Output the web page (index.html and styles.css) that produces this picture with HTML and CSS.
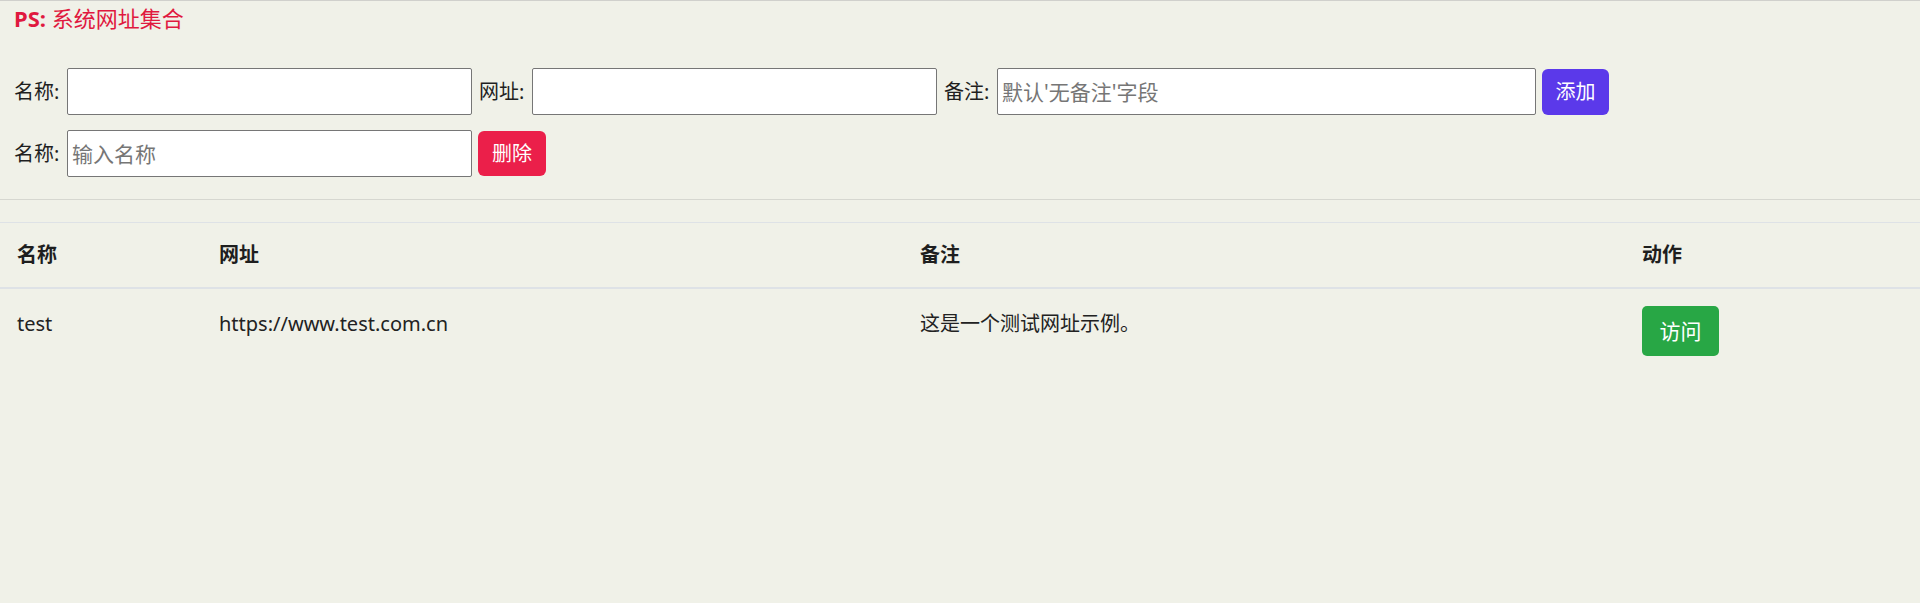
FILE: index.html
```html
<!DOCTYPE html>
<html lang="zh-CN">
<head>
<meta charset="utf-8">
<title>系统网址集合</title>
<link rel="stylesheet" href="styles.css">
</head>
<body>
<h1 class="title"><b>PS:</b> 系统网址集合</h1>
<div class="forms">
  <div class="form-row">
    <label class="lbl">名称:</label>
    <input class="field" type="text">
    <label class="lbl lbl-next">网址:</label>
    <input class="field" type="text">
    <label class="lbl lbl-next">备注:</label>
    <input class="field field-wide" type="text" placeholder="默认'无备注'字段">
    <button class="btn btn-add">添加</button>
  </div>
  <div class="form-row">
    <label class="lbl">名称:</label>
    <input class="field" type="text" placeholder="输入名称">
    <button class="btn btn-del">删除</button>
  </div>
</div>
<hr class="divider">
<table class="sites">
  <colgroup>
    <col class="c1"><col class="c2"><col class="c3"><col>
  </colgroup>
  <thead>
    <tr><th>名称</th><th>网址</th><th>备注</th><th>动作</th></tr>
  </thead>
  <tbody>
    <tr>
      <td>test</td>
      <td>https://www.test.com.cn</td>
      <td>这是一个测试网址示例。</td>
      <td class="act"><button class="btn btn-visit">访问</button></td>
    </tr>
  </tbody>
</table>
</body>
</html>
```
FILE: styles.css
```css
html, body {
  margin: 0;
  padding: 0;
}
body {
  background: #f0f1e8;
  border-top: 1px solid #d0d0cc;
  font-family: "Noto Sans", "Noto Sans CJK SC", sans-serif;
  color: #212529;
}
.title {
  margin: 0;
  padding: 2px 14px 0;
  font-size: 22px;
  line-height: 30px;
  font-weight: normal;
  color: #e0193f;
}
.title b {
  font-weight: 700;
}
.forms {
  margin-top: 35px;
  padding: 0 14px;
  display: flex;
  flex-direction: column;
  gap: 15px;
}
.form-row {
  display: flex;
  align-items: center;
  height: 47px;
}
.lbl {
  width: 49px;
  margin-right: 4px;
  font-size: 20px;
  line-height: 30px;
  color: #1f1f1f;
  white-space: nowrap;
}
.lbl-next {
  margin-left: 7px;
}
.field {
  box-sizing: border-box;
  width: 405px;
  height: 47px;
  border: 1px solid #767676;
  border-radius: 2px;
  background: #fff;
  padding: 0 4px;
  font-family: "Noto Sans", "Noto Sans CJK SC", sans-serif;
  font-size: 21px;
  color: #222;
}
.field::placeholder {
  color: #767676;
}
.field-wide {
  width: 539px;
}
.btn {
  box-sizing: border-box;
  border: none;
  color: #fff;
  font-family: "Noto Sans", "Noto Sans CJK SC", sans-serif;
  font-size: 20px;
  line-height: 28px;
  padding: 0;
  border-radius: 6px;
  cursor: pointer;
}
.btn-add {
  margin-left: 6px;
  width: 67px;
  height: 46px;
  background: #5b39ea;
}
.btn-del {
  margin-left: 6px;
  width: 68px;
  height: 45px;
  background: #eb1f4a;
}
.divider {
  margin: 22px 0 0;
  border: 0;
  border-top: 1px solid #d6d7d0;
  height: 0;
}
.sites {
  margin-top: 22px;
  width: 100%;
  border-collapse: collapse;
  table-layout: fixed;
  font-size: 20px;
  line-height: 30px;
}
.c1 { width: 202px; }
.c2 { width: 701px; }
.c3 { width: 722px; }
.sites th {
  text-align: left;
  font-weight: 700;
  padding: 17px 17px;
  border-top: 1px solid #dee2e6;
  border-bottom: 2px solid #dee2e6;
  color: #1e1e1e;
}
.sites td {
  padding: 20px 17px;
  vertical-align: top;
  color: #222;
}
.sites td.act {
  padding-top: 17px;
}
.btn-visit {
  width: 77px;
  height: 50px;
  background: #28a745;
  font-size: 21px;
  border-radius: 5px;
}
```
